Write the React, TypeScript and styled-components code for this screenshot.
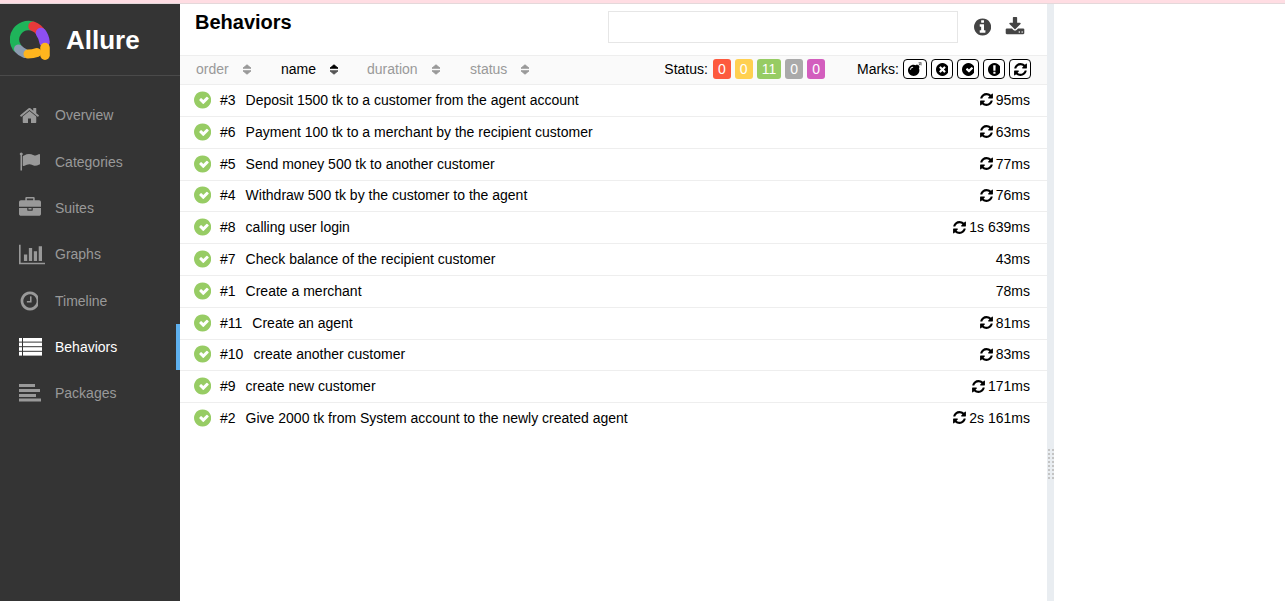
import styled, { createGlobalStyle } from 'styled-components';
import { FaBomb } from 'react-icons/fa';

const GlobalStyle = createGlobalStyle`
  html, body {
    margin: 0;
    height: 100%;
    background: #fff;
    overflow: hidden;
  }
  body {
    font-family: "Liberation Sans", Arial, sans-serif;
    font-size: 14px;
    color: #000;
  }
`;

const Page = styled.div`
  display: flex;
  flex-direction: column;
  height: 601px;
`;

const TopStrip = styled.div`
  height: 3px;
  background: #ffdde3;
  border-bottom: 1px solid #e4d8da;
  flex: none;
`;

const Body = styled.div`
  display: flex;
  flex: 1;
  min-height: 0;
`;

const Sidebar = styled.nav`
  width: 180px;
  flex: none;
  background: #343434;
  display: flex;
  flex-direction: column;
`;

const Brand = styled.div`
  height: 70px;
  padding: 1px 0 0 10px;
  display: flex;
  align-items: center;
  gap: 16px;
  border-bottom: 1px solid #4a4a4a;
  margin-bottom: 16.3px;
`;

const BrandName = styled.span`
  color: #fff;
  font-size: 26px;
  font-weight: 700;
`;

const NavItem = styled.div<{ $active?: boolean }>`
  height: 46.3px;
  display: flex;
  align-items: center;
  padding-left: 19px;
  color: ${(p) => (p.$active ? '#fff' : '#999')};
  border-right: 4px solid ${(p) => (p.$active ? '#5eb0ee' : 'transparent')};
`;

const NavIcon = styled.span`
  width: 36px;
  flex: none;
  display: flex;
  align-items: center;
  svg {
    display: block;
  }
`;

const Main = styled.main`
  width: 867px;
  flex: none;
  display: flex;
  flex-direction: column;
`;

const Header = styled.header`
  height: 51px;
  display: flex;
  align-items: flex-start;
  padding-left: 15px;
  border-bottom: 1px solid #eee;
  flex: none;
`;

const Title = styled.h2`
  margin: 7px 0 0;
  font-size: 20px;
  line-height: 23px;
  font-weight: 700;
  flex: 1;
`;

const Search = styled.input`
  width: 350px;
  height: 32px;
  box-sizing: border-box;
  margin-top: 7px;
  border: 1px solid #e6e6e6;
  background: #fff;
  outline: none;
`;

const HeaderButton = styled.span`
  width: 33px;
  height: 20px;
  margin-top: 13px;
  display: flex;
  justify-content: center;
  color: #444;
  & + & {
    margin-left: -1px;
  }
`;

const HeaderTools = styled.div`
  display: flex;
  margin-left: 8px;
  margin-right: 16px;
`;

const SortBar = styled.div`
  height: 26px;
  padding: 0 16px 2px;
  flex: none;
  display: flex;
  align-items: center;
  background: #fafafa;
  border-bottom: 1px solid #eee;
`;

const SortItem = styled.span<{ $on?: boolean; $width: number }>`
  width: ${(p) => p.$width}px;
  flex: none;
  display: flex;
  align-items: center;
  gap: 13px;
  color: ${(p) => (p.$on ? '#000' : '#999')};
`;

const Spacer = styled.span`
  flex: 1;
`;

const Label = styled.span<{ $gap: number }>`
  margin-right: ${(p) => p.$gap}px;
`;

const Count = styled.span<{ $color: string }>`
  height: 20px;
  padding: 0 5px;
  border-radius: 3px;
  background: ${(p) => p.$color};
  color: #fff;
  display: flex;
  align-items: center;
  & + & {
    margin-left: 4.1px;
  }
`;

const Marks = styled.div`
  display: flex;
  align-items: center;
  margin-left: 32px;
`;

const Mark = styled.span<{ $wide?: boolean }>`
  width: ${(p) => (p.$wide ? 24 : 22)}px;
  height: 20px;
  box-sizing: border-box;
  border: 1px solid #000;
  border-radius: 4px;
  display: flex;
  align-items: center;
  justify-content: center;
  background: #fff;
  & + & {
    margin-left: 4px;
  }
`;

const RowList = styled.div`
  margin-top: 0.2px;
`;

const Row = styled.div`
  height: 31.8px;
  box-sizing: border-box;
  display: flex;
  align-items: center;
  padding: 0 17px 1.2px 14px;
  border-bottom: 1px solid #eee;
  &:last-child {
    border-bottom-color: transparent;
  }
`;

const RowIcon = styled.span`
  color: #97cc64;
  width: 26px;
  flex: none;
  display: flex;
`;

const Order = styled.span`
  margin-right: 10px;
`;

const Name = styled.span`
  flex: 1;
`;

const Retry = styled.span`
  display: flex;
  margin-right: 2px;
`;

const Gutter = styled.div`
  width: 7px;
  flex: none;
  background: #e9edf1;
  display: flex;
  justify-content: center;
  padding-top: 445px;
  box-sizing: border-box;
`;

const Grip = styled.div`
  width: 6px;
  height: 31px;
  background-image: linear-gradient(#c4c4c4 2px, transparent 2px);
  background-size: 100% 4px;
  -webkit-mask-image: linear-gradient(90deg, #000 2px, transparent 2px, transparent 4px, #000 4px);
  mask-image: linear-gradient(90deg, #000 2px, transparent 2px, transparent 4px, #000 4px);
`;

const RightPane = styled.div`
  flex: 1;
  background: #fff;
`;

const CIRCLE = 'q0 209-103 385.5t-279.5 279.5-385.5 103-385.5-103-279.5-279.5-103-385.5 103-385.5 279.5-279.5 385.5-103 385.5 103 279.5 279.5 103 385.5z';

const paths = {
  home: 'M1472 992v480q0 26-19 45t-45 19h-384v-384h-256v384h-384q-26 0-45-19t-19-45v-480q0-1 .5-3t.5-3l575-474 575 474q1 2 1 6zm223-69l-62 74q-8 9-21 11h-3q-13 0-21-7l-692-577-692 577q-12 8-24 7-13-2-21-11l-62-74q-8-10-7-23.5t11-21.5l719-599q32-26 76-26t76 26l244 204v-195q0-14 9-23t23-9h192q14 0 23 9t9 23v408l219 182q10 8 11 21.5t-7 23.5z',
  flag: 'M320 256q0 72-64 110v1266q0 13-9.5 22.5t-22.5 9.5h-64q-13 0-22.5-9.5t-9.5-22.5v-1266q-64-38-64-110 0-53 37.5-90.5t90.5-37.5 90.5 37.5 37.5 90.5zm1472 64v763q0 25-12.5 38.5t-39.5 27.5q-215 116-369 116-61 0-123.5-22t-108.5-48-115.5-48-142.5-22q-192 0-464 146-17 9-33 9-26 0-45-19t-19-45v-742q0-32 31-55 21-14 79-43 236-120 421-120 107 0 200 29t219 88q38 19 88 19 54 0 117.5-21t110-47 88-47 54.5-21q26 0 45 19t19 45z',
  briefcase: 'M640 256h512v-128h-512v128zm1152 640v480q0 66-47 113t-113 47h-1472q-66 0-113-47t-47-113v-480h672v160q0 26 19 45t45 19h320q26 0 45-19t19-45v-160h672zm-768 0v128h-256v-128h256zm768-480v384h-1792v-384q0-66 47-113t113-47h352v-160q0-40 28-68t68-28h576q40 0 68 28t28 68v160h352q66 0 113 47t47 113z',
  chart: 'M640 896v512h-256v-512h256zm384-512v1024h-256v-1024h256zm1024 1152v128h-2048v-1536h128v1408h1920zm-640-896v768h-256v-768h256zm384-384v1152h-256v-1152h256z',
  clock: 'M1024 544v448q0 14-9 23t-23 9h-320q-14 0-23-9t-9-23v-64q0-14 9-23t23-9h224v-352q0-14 9-23t23-9h64q14 0 23 9t9 23zm416 352q0-148-73-273t-198-198-273-73-273 73-198 198-73 273 73 273 198 198 273 73 273-73 198-198 73-273zm224 0' + CIRCLE,
  info: 'M1024 1376v-160q0-14-9-23t-23-9h-96v-512q0-14-9-23t-23-9h-320q-14 0-23 9t-9 23v160q0 14 9 23t23 9h96v320h-96q-14 0-23 9t-9 23v160q0 14 9 23t23 9h448q14 0 23-9t9-23zm-128-896v-160q0-14-9-23t-23-9h-192q-14 0-23 9t-9 23v160q0 14 9 23t23 9h192q14 0 23-9t9-23zm640 416' + CIRCLE,
  download: 'M1344 1344q0-26-19-45t-45-19-45 19-19 45 19 45 45 19 45-19 19-45zm256 0q0-26-19-45t-45-19-45 19-19 45 19 45 45 19 45-19 19-45zm128-224v320q0 40-28 68t-68 28h-1472q-40 0-68-28t-28-68v-320q0-40 28-68t68-28h465l135 136q58 56 136 56t136-56l136-136h464q40 0 68 28t28 68zm-325-569q17 41-14 70l-448 448q-18 19-45 19t-45-19l-448-448q-31-29-14-70 17-39 59-39h256v-448q0-26 19-45t45-19h256q26 0 45 19t19 45v448h256q42 0 59 39z',
  check: 'M1299 813l-422 422q-19 19-45 19t-45-19l-294-294q-19-19-19-45t19-45l102-102q19-19 45-19t45 19l147 147 275-275q19-19 45-19t45 19l102 102q19 19 19 45t-19 45zm237 83' + CIRCLE,
  times: 'M1149 1122q0-26-19-45l-181-181 181-181q19-19 19-45 0-27-19-46l-90-90q-19-19-46-19-26 0-45 19l-181 181-181-181q-19-19-45-19-27 0-46 19l-90 90q-19 19-19 46 0 26 19 45l181 181-181 181q-19 19-19 45 0 27 19 46l90 90q19 19 46 19 26 0 45-19l181-181 181 181q19 19 45 19 27 0 46-19l90-90q19-19 19-46zm387-226' + CIRCLE,
  exclamation: 'M768 128q209 0 385.5 103t279.5 279.5 103 385.5-103 385.5-279.5 279.5-385.5 103-385.5-103-279.5-279.5-103-385.5 103-385.5 279.5-279.5 385.5-103zm128 1247v-190q0-14-9-23.5t-22-9.5h-192q-13 0-23 10t-10 23v190q0 13 10 23t23 10h192q13 0 22-9.5t9-23.5zm-2-344l18-621q0-12-10-18-10-8-24-8h-220q-14 0-24 8-10 6-10 18l17 621q0 10 10 17.5t24 7.5h185q14 0 23.5-7.5t10.5-17.5z',
  refresh: 'M1639 1056q0 5-1 7-64 268-268 434.5t-478 166.5q-146 0-282.5-55t-243.5-157l-129 129q-19 19-45 19t-45-19-19-45v-448q0-26 19-45t45-19h448q26 0 45 19t19 45-19 45l-137 137q71 66 161 102t187 36q134 0 250-65t186-179q11-17 53-117 8-23 30-23h192q13 0 22.5 9.5t9.5 22.5zm25-800v448q0 26-19 45t-45 19h-448q-26 0-45-19t-19-45 19-45l138-138q-148-137-349-137-134 0-250 65t-186 179q-11 17-53 117-8 23-30 23h-199q-13 0-22.5-9.5t-9.5-22.5v-7q65-268 270-434.5t480-166.5q146 0 284 55.5t245 156.5l130-129q19-19 45-19t45 19 19 45z',
};

type GlyphName = keyof typeof paths;

const Glyph = ({ name, size, vw = 1536 }: { name: GlyphName; size: number; vw?: number }) => (
  <svg width={(size * vw) / 1792} height={size} viewBox={`0 0 ${vw} 1792`} fill="currentColor">
    <path d={paths[name]} fillRule="evenodd" />
  </svg>
);

const ListGlyph = () => (
  <svg width="23" height="18" viewBox="0 0 23 18" fill="currentColor">
    <rect x="0" y="0" width="3" height="3.6" />
    <rect x="4" y="0" width="19" height="3.6" />
    <rect x="0" y="4.6" width="3" height="3.6" />
    <rect x="4" y="4.6" width="19" height="3.6" />
    <rect x="0" y="9.2" width="3" height="3.6" />
    <rect x="4" y="9.2" width="19" height="3.6" />
    <rect x="0" y="13.8" width="3" height="3.8" />
    <rect x="4" y="13.8" width="19" height="3.8" />
  </svg>
);

const BarsGlyph = () => (
  <svg width="22" height="18" viewBox="0 0 22 18" fill="currentColor">
    <rect x="0" y="0" width="16" height="3" />
    <rect x="0" y="5" width="21" height="3" />
    <rect x="0" y="10" width="17" height="3" />
    <rect x="0" y="14.5" width="22" height="3" />
  </svg>
);

const SortGlyph = ({ up = '#999', down = '#999' }: { up?: string; down?: string }) => (
  <svg width="10" height="11" viewBox="0 0 10 11" strokeLinejoin="round">
    <path d="M1 4.2 L5 0.8 L9 4.2 Z" fill={up} stroke={up} />
    <path d="M1 6.8 L5 10.2 L9 6.8 Z" fill={down} stroke={down} />
  </svg>
);

const Logo = () => (
  <svg width="40" height="40" viewBox="0 0 40 40" fill="none" strokeWidth="9.5" strokeLinecap="round">
    <path d="M7 27.5 A14 14 0 0 1 22 6" stroke="#1fb45a" />
    <path d="M8.5 29 Q11 32 15 33.5" stroke="#8b9cb0" strokeWidth="9" />
    <path d="M18 34 Q23 34 27 32.5" stroke="#ffb51e" strokeWidth="9" />
    <path d="M23 6.3 A14 14 0 0 1 31 13" stroke="#e63a3a" />
    <path d="M31 13 Q34 17 34.5 22" stroke="#8e4ff0" strokeWidth="10.5" />
    <path d="M35 27.5 L35 35.2" stroke="#ffb51e" strokeWidth="9.5" />
  </svg>
);

const navItems = [
  { label: 'Overview', icon: <Glyph name="home" size={21} vw={1792} /> },
  { label: 'Categories', icon: <Glyph name="flag" size={21} vw={1792} /> },
  { label: 'Suites', icon: <Glyph name="briefcase" size={22} vw={1792} /> },
  { label: 'Graphs', icon: <Glyph name="chart" size={23} vw={2048} /> },
  { label: 'Timeline', icon: <Glyph name="clock" size={22} /> },
  { label: 'Behaviors', icon: <ListGlyph />, active: true },
  { label: 'Packages', icon: <BarsGlyph /> },
];

const sorters = [
  { label: 'order', width: 85 },
  { label: 'name', width: 86, on: true },
  { label: 'duration', width: 103 },
  { label: 'status', width: 80 },
];

const counts = [
  { n: 0, color: '#fd5a3e' },
  { n: 0, color: '#ffd050' },
  { n: 11, color: '#97cc64' },
  { n: 0, color: '#aaaaaa' },
  { n: 0, color: '#d35ebe' },
];

const rows = [
  { order: 3, name: 'Deposit 1500 tk to a customer from the agent account', time: '95ms', retry: true },
  { order: 6, name: 'Payment 100 tk to a merchant by the recipient customer', time: '63ms', retry: true },
  { order: 5, name: 'Send money 500 tk to another customer', time: '77ms', retry: true },
  { order: 4, name: 'Withdraw 500 tk by the customer to the agent', time: '76ms', retry: true },
  { order: 8, name: 'calling user login', time: '1s 639ms', retry: true },
  { order: 7, name: 'Check balance of the recipient customer', time: '43ms' },
  { order: 1, name: 'Create a merchant', time: '78ms' },
  { order: 11, name: 'Create an agent', time: '81ms', retry: true },
  { order: 10, name: 'create another customer', time: '83ms', retry: true },
  { order: 9, name: 'create new customer', time: '171ms', retry: true },
  { order: 2, name: 'Give 2000 tk from System account to the newly created agent', time: '2s 161ms', retry: true },
];

export default function App() {
  return (
    <Page>
      <GlobalStyle />
      <TopStrip />
      <Body>
        <Sidebar>
          <Brand>
            <Logo />
            <BrandName>Allure</BrandName>
          </Brand>
          {navItems.map(({ label, icon, active }) => (
            <NavItem key={label} $active={active}>
              <NavIcon>{icon}</NavIcon>
              {label}
            </NavItem>
          ))}
        </Sidebar>
        <Main>
          <Header>
            <Title>Behaviors</Title>
            <Search />
            <HeaderTools>
              <HeaderButton>
                <Glyph name="info" size={20} />
              </HeaderButton>
              <HeaderButton>
                <Glyph name="download" size={20} vw={1792} />
              </HeaderButton>
            </HeaderTools>
          </Header>
          <SortBar>
            {sorters.map((s) => (
              <SortItem key={s.label} $on={s.on} $width={s.width}>
                {s.label}
                {s.on ? <SortGlyph up="#000" down="#555" /> : <SortGlyph />}
              </SortItem>
            ))}
            <Spacer />
            <Label $gap={5}>Status:</Label>
            {counts.map((c, i) => (
              <Count key={i} $color={c.color}>
                {c.n}
              </Count>
            ))}
            <Marks>
              <Label $gap={4}>Marks:</Label>
              <Mark $wide><FaBomb size={14} /></Mark>
              <Mark><Glyph name="times" size={15} /></Mark>
              <Mark><Glyph name="check" size={15} /></Mark>
              <Mark><Glyph name="exclamation" size={15} /></Mark>
              <Mark><Glyph name="refresh" size={15} vw={1792} /></Mark>
            </Marks>
          </SortBar>
          <RowList>
            {rows.map((r) => (
              <Row key={r.order}>
                <RowIcon>
                  <Glyph name="check" size={20} />
                </RowIcon>
                <Order>#{r.order}</Order>
                <Name>{r.name}</Name>
                {r.retry && (
                  <Retry>
                    <Glyph name="refresh" size={15} vw={1792} />
                  </Retry>
                )}
                {r.time}
              </Row>
            ))}
          </RowList>
        </Main>
        <Gutter>
          <Grip />
        </Gutter>
        <RightPane />
      </Body>
    </Page>
  );
}
